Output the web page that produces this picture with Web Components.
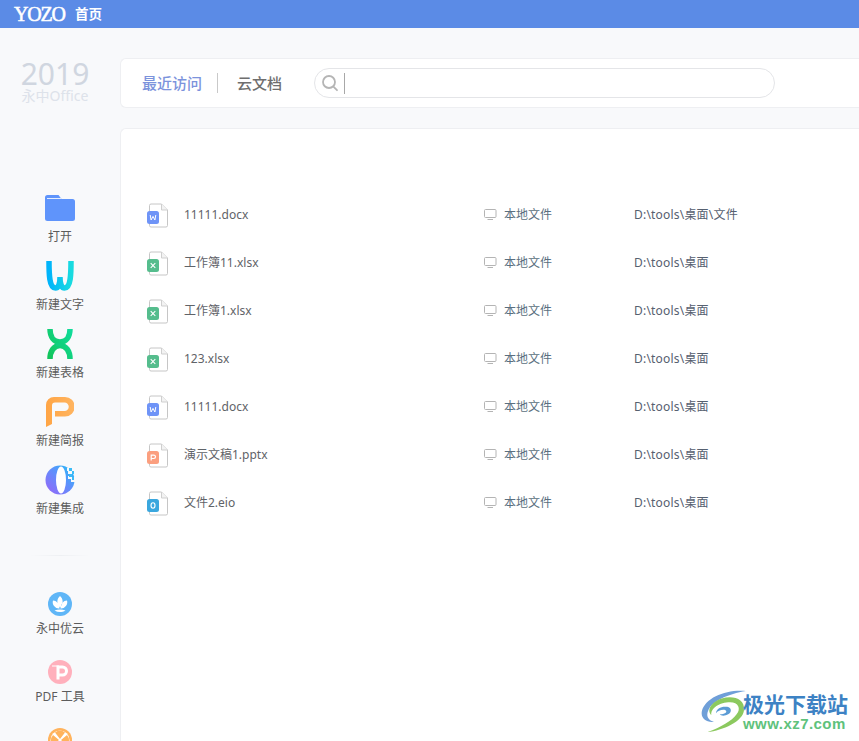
<!DOCTYPE html>
<html lang="zh">
<head>
<meta charset="utf-8">
<title>YOZO</title>
<style>
  html, body { margin: 0; height: 100%; overflow: hidden; background: #f8f9fb; }
  body { font-family: "Noto Sans", "Noto Sans CJK SC", sans-serif; }
</style>
</head>
<body>
<yozo-app></yozo-app>

<script>
const FONT = `"Noto Sans", "Noto Sans CJK SC", sans-serif`;

customElements.define('title-bar', class TitleBar extends HTMLElement {
  constructor() {
    super();
    this.attachShadow({mode: 'open'});
    this.shadowRoot.innerHTML = `<style>
      :host { display: flex; align-items: center; height: 28px; background: #5b8be6; color: #fff; padding-left: 14px; box-sizing: border-box; }
      .logo { font: 20px/28px "Liberation Serif", serif; -webkit-text-stroke: .5px #fff; letter-spacing: -1.2px; width: 61px; }
      .home { font: bold 13.5px/28px ${FONT}; }
    </style>
    <span class="logo">YOZO</span><span class="home"><slot></slot></span>`;
  }
});

customElements.define('nav-item', class NavItem extends HTMLElement {
  constructor() {
    super();
    this.attachShadow({mode: 'open'});
    this.shadowRoot.innerHTML = `<style>
      :host { display: flex; flex: none; flex-direction: column; align-items: center; height: 68px; color: #5c5c5c; font: 12px/16px ${FONT}; }
      .icon { height: 34px; width: 40px; display: flex; flex: none; align-items: center; justify-content: center; margin-bottom: 4px; }
      :host([slot="tools"]) .icon { margin-bottom: 0; }
      ::slotted(svg) { display: block; flex: none; }
    </style>
    <div class="icon"><slot name="icon"></slot></div>
    <span><slot></slot></span>`;
  }
});

customElements.define('side-nav', class SideNav extends HTMLElement {
  constructor() {
    super();
    this.attachShadow({mode: 'open'});
    this.shadowRoot.innerHTML = `<style>
      :host { display: flex; flex-direction: column; width: 120px; flex: none; box-sizing: border-box; overflow: hidden; }
      .brand { height: 163px; flex: none; padding: 31px 10px 0 0; box-sizing: border-box; text-align: center; color: #d0d6e0; }
      .year { font: 30px/29px ${FONT}; }
      .name { font: 14px/16px ${FONT}; color: #dde2ea; }
      hr { border: 0; height: 1px; width: 60px; flex: none; margin: 24px auto 31px; background: linear-gradient(90deg, #f8f9fb, #eef0f3, #f8f9fb); }
    </style>
    <div class="brand"><div class="year">2019</div><div class="name">永中Office</div></div>
    <slot name="create"></slot>
    <hr>
    <slot name="tools"></slot>`;
  }
});

customElements.define('search-bar', class SearchBar extends HTMLElement {
  constructor() {
    super();
    this.attachShadow({mode: 'open'});
    this.shadowRoot.innerHTML = `<style>
      :host { display: flex; align-items: center; width: 461px; height: 30px; box-sizing: border-box; border: 1px solid #e4e5e8; border-radius: 15px; background: #fff; padding-left: 6px; }
      svg { display: block; }
      i { width: 1px; height: 21px; background: #a8a8a8; margin-left: 5px; }
    </style>
    <svg width="18" height="18" viewBox="0 0 18 18" fill="none" stroke="#b5b5b5" stroke-width="1.8"><circle cx="8" cy="8" r="6"/><path d="M12.4 12.6 16 16.2" stroke-linecap="round"/></svg>
    <i></i>`;
  }
});

customElements.define('top-card', class TopCard extends HTMLElement {
  constructor() {
    super();
    this.attachShadow({mode: 'open'});
    this.shadowRoot.innerHTML = `<style>
      :host { display: flex; flex: none; align-items: center; height: 50px; box-sizing: border-box; background: #fff; border: 1px solid #eeeff2; border-right: 0; border-radius: 6px 0 0 6px; font: 500 15px/20px ${FONT}; }
      .on { color: #7c93dc; margin-left: 21px; width: 60px; white-space: nowrap; }
      .sep { width: 1px; height: 20px; background: #c9c9c9; margin: 0 19px 0 15px; }
      .off { color: #6e6e6e; width: 45px; margin-right: 32px; white-space: nowrap; }
    </style>
    <span class="on">最近访问</span><span class="sep"></span><span class="off">云文档</span>
    <search-bar></search-bar>`;
  }
});

const DOC_COLORS = { w: '#6f94f7', x: '#55bd8d', p: '#fb9f7f', o: '#3aa7de' };

customElements.define('file-icon', class FileIcon extends HTMLElement {
  constructor() {
    super();
    this.attachShadow({mode: 'open'});
    const t = this.getAttribute('type') || 'w';
    const c = DOC_COLORS[t];
    this.shadowRoot.innerHTML = `<style>
      :host { display: block; width: 24px; height: 26px; }
      svg { display: block; }
    </style>
    <svg width="24" height="26" viewBox="0 0 24 26">
      <path d="M3.500 3.500a1.500 1.500 0 0 1 1.500-1.500h10.500l6 6v15.500a1.500 1.500 0 0 1-1.500 1.500H5a1.500 1.500 0 0 1-1.500-1.500z" fill="#fff" stroke="#c6c6c6" stroke-width="1"/>
      <path d="M15.500 2v6h6" fill="#f3f3f3" stroke="#cfcfcf" stroke-width="1"/>
      <rect x="1" y="9" width="12" height="13" rx="2.500" fill="${c}"/>
      ${{
        w: '<path d="M4.200 13l.9 5 1.900-3.600 1.900 3.600.9-5" fill="none" stroke="#fff" stroke-width="1"/>',
        x: '<path d="M4.700 13.200l4.600 4.600M9.300 13.200l-4.600 4.600" fill="none" stroke="#fff" stroke-width="1.100"/>',
        p: '<path d="M5.200 18.500v-5.400h2.600a1.700 1.700 0 0 1 0 3.400H5.200" fill="none" stroke="#fff" stroke-width="1.200"/>',
        o: '<ellipse cx="7" cy="15.500" rx="2" ry="2.700" fill="none" stroke="#fff" stroke-width="1.100"/>'
      }[t]}
    </svg>`;
  }
});

customElements.define('file-row', class FileRow extends HTMLElement {
  constructor() {
    super();
    this.attachShadow({mode: 'open'});
    this.shadowRoot.innerHTML = `<style>
      :host { display: grid; grid-template-columns: 63px 300px 20px 130px 1fr; align-items: center; height: 48px; color: #5f6368; font: 12px/16px ${FONT}; }
      .ic { padding-left: 25px; }
      .loc { color: #5a6f80; }
      svg { display: block; }
      .path { color: #566070; letter-spacing: .2px; }
    </style>
    <div class="ic"><file-icon type="${this.getAttribute('type')}"></file-icon></div>
    <div><slot></slot></div>
    <svg width="14" height="14" viewBox="0 0 14 14" fill="none" stroke="#b4b4b4"><rect x=".5" y="1.500" width="11.500" height="8" rx="1"/><path d="M3.500 11.500h5.500"/></svg>
    <div class="loc">本地文件</div>
    <div class="path">${this.getAttribute('path')}</div>`;
  }
});

customElements.define('file-list', class FileList extends HTMLElement {
  constructor() {
    super();
    this.attachShadow({mode: 'open'});
    this.shadowRoot.innerHTML = `<style>
      :host { display: block; flex: 1; margin-top: 20px; padding-top: 62px; box-sizing: border-box; background: #fff; border: 1px solid #eeeff2; border-right: 0; border-bottom: 0; border-radius: 6px 0 0 0; }
    </style><slot></slot>`;
  }
});

customElements.define('site-mark', class SiteMark extends HTMLElement {
  constructor() {
    super();
    this.attachShadow({mode: 'open'});
    this.shadowRoot.innerHTML = `<style>
      :host { position: absolute; right: 11px; bottom: 8px; display: flex; align-items: center; }
      svg { display: block; margin-right: -4px; }
      .t { font: bold 21px/24px "Noto Sans CJK SC", sans-serif; color: #3d82c4; white-space: nowrap; }
      .u { font: bold 15px/17px "Liberation Sans", sans-serif; color: #5fc27c; white-space: nowrap; letter-spacing: .45px; }
    </style>
    <svg width="47" height="43" viewBox="0 0 50 46" fill="none">
      <path d="M49 1C28-1 6 8 2 22c-2 8 4 13 13 12-7-2-9-7-6-13C13 12 30 4 49 1z" fill="#6f9fd8"/>
      <path d="M12 27c-1-8 9-14 20-14 9 0 12 7 7 13-5 7-17 14-31 19 16-2 38-11 39-24 1-11-11-16-24-12C14 12 6 20 12 27z" fill="#8cc95f"/>
      <path d="M17 25c0-5 6-8 12-7 5 1 5 6 1 8-3 2-8 2-9 0 3 0 7-1 7-3 0-3-9-2-11 2z" fill="#5b9bd5"/>
    </svg>
    <div><div class="t">极光下载站</div><div class="u">www.xz7.com</div></div>`;
  }
});

customElements.define('yozo-app', class YozoApp extends HTMLElement {
  constructor() {
    super();
    this.attachShadow({mode: 'open'});
    const files = [
      ['w', '11111.docx', 'D:\\tools\\桌面\\文件'],
      ['x', '工作簿11.xlsx', 'D:\\tools\\桌面'],
      ['x', '工作簿1.xlsx', 'D:\\tools\\桌面'],
      ['x', '123.xlsx', 'D:\\tools\\桌面'],
      ['w', '11111.docx', 'D:\\tools\\桌面'],
      ['p', '演示文稿1.pptx', 'D:\\tools\\桌面'],
      ['o', '文件2.eio', 'D:\\tools\\桌面'],
    ];
    this.shadowRoot.innerHTML = `<style>
      :host { display: flex; flex-direction: column; position: relative; width: 859px; height: 741px; overflow: hidden; background: #f8f9fb; }
      .body { display: flex; flex: 1; min-height: 0; }
      .main { flex: 1; display: flex; flex-direction: column; padding-top: 30px; min-width: 0; }
    </style>
    <title-bar>首页</title-bar>
    <div class="body">
      <side-nav>
        <nav-item slot="create">
          <svg slot="icon" width="30" height="26" viewBox="0 0 30 26"><path d="M0 2.500A2.500 2.500 0 0 1 2.500 0h11l3 4h11A2.500 2.500 0 0 1 30 6.500v17a2.500 2.500 0 0 1-2.500 2.500h-25A2.500 2.500 0 0 1 0 23.500z" fill="#5f94fb"/><path d="M2 3.500h14" stroke="#e4edff" stroke-width="1"/></svg>
          打开
        </nav-item>
        <nav-item slot="create">
          <svg slot="icon" width="28" height="30" viewBox="0 0 28 30" fill="none"><defs><linearGradient id="gw" x1="0" x2="1"><stop offset="0" stop-color="#00b4fb"/><stop offset="1" stop-color="#19dbe0"/></linearGradient></defs><path d="M3 0C3 12 3 27 9.500 27 13 27 14 21 14 16 14 21 15 27 18.500 27 25 27 25 12 25 0" stroke="url(#gw)" stroke-width="5.500"/></svg>
          新建文字
        </nav-item>
        <nav-item slot="create">
          <svg slot="icon" width="26" height="30" viewBox="0 0 26 30" fill="none"><defs><linearGradient id="gx" x1="0" x2="1" y1="1" y2="0"><stop offset="0" stop-color="#12c45a"/><stop offset="1" stop-color="#10dc9a"/></linearGradient></defs><path d="M3 0C3 8 7 13 13 13S23 8 23 0M3 30C3 22 7 16.500 13 16.500S23 22 23 30" stroke="url(#gx)" stroke-width="5.500"/><path d="M9 14h8v3H9z" fill="#10d07f"/></svg>
          新建表格
        </nav-item>
        <nav-item slot="create">
          <svg slot="icon" width="28" height="30" viewBox="0 0 28 30" fill="none"><defs><linearGradient id="gp" x1="0" x2="1"><stop offset="0" stop-color="#ffa545"/><stop offset="1" stop-color="#ffb561"/></linearGradient></defs><path d="M0 30V8a8 8 0 0 1 8-8h11a9 9 0 0 1 0 19.500H9v-5.500h9.500a3.700 3.700 0 0 0 0-8.500H9a3 3 0 0 0-3 3V27z" fill="url(#gp)"/></svg>
          新建简报
        </nav-item>
        <nav-item slot="create">
          <svg slot="icon" width="30" height="30" viewBox="0 0 30 30"><defs><linearGradient id="go" x1="0" x2="1" y1="1" y2="0"><stop offset="0" stop-color="#9a63f8"/><stop offset=".55" stop-color="#5f90fc"/><stop offset="1" stop-color="#1fc4f6"/></linearGradient></defs><circle cx="15" cy="15" r="14.500" fill="url(#go)"/><ellipse cx="16" cy="15" rx="5" ry="13.500" fill="#fff"/><path d="M24 0h6v3h-3v3h3v3h-3v3h3v5h-4v-3h-3v-3h3V9h-3V6h-1V3h2z" fill="#f8f9fb"/><path d="M24 3h3v3h-3zM27 6h2v3h-2zM24 9h3v3h-3zM27 12h2v3h-2z" fill="#3bbcf7"/></svg>
          新建集成
        </nav-item>
        <nav-item slot="tools">
          <svg slot="icon" width="24" height="24" viewBox="0 0 24 24"><circle cx="12" cy="12" r="12" fill="#5fb6f7"/><path d="M12 4c3.500 3 3.500 7.500 0 11.500-3.500-4-3.500-8.500 0-11.500zM5 8.500c3.500 0 6 3.500 6.500 8-3.500.5-8-3.500-6.500-8zM19 8.500c-3.500 0-6 3.500-6.500 8 3.500.5 8-3.500 6.500-8z" fill="#fff"/><path d="M6.500 18.500c3.500-1.500 7.500-1.500 11 0-3.500 2-7.500 2-11 0z" fill="#fff"/></svg>
          永中优云
        </nav-item>
        <nav-item slot="tools">
          <svg slot="icon" width="24" height="24" viewBox="0 0 24 24"><circle cx="12" cy="12" r="12" fill="#ffb0bc"/><path d="M10 19.500V7h4.500a4 4 0 0 1 0 8H11" fill="none" stroke="#fff" stroke-width="3"/><path d="M4 6h7" stroke="#fff" stroke-width="1"/></svg>
          PDF 工具
        </nav-item>
        <nav-item slot="tools">
          <svg slot="icon" width="24" height="24" viewBox="0 0 24 24"><circle cx="12" cy="12" r="12" fill="#ffb35c"/><circle cx="12" cy="12" r="9.500" fill="#fff"/><path d="M12 11 7 4.500a8 8 0 0 1 10 0zM13 12l6-5a8 8 0 0 1 0 10zM11 12 5 7a8 8 0 0 0 0 10z" fill="#ffb35c"/></svg>
        </nav-item>
      </side-nav>
      <div class="main">
        <top-card></top-card>
        <file-list>
          ${files.map(f => `<file-row type="${f[0]}" path="${f[2]}">${f[1]}</file-row>`).join('')}
        </file-list>
      </div>
    </div>
    <site-mark></site-mark>`;
  }
});
</script>
</body>
</html>
